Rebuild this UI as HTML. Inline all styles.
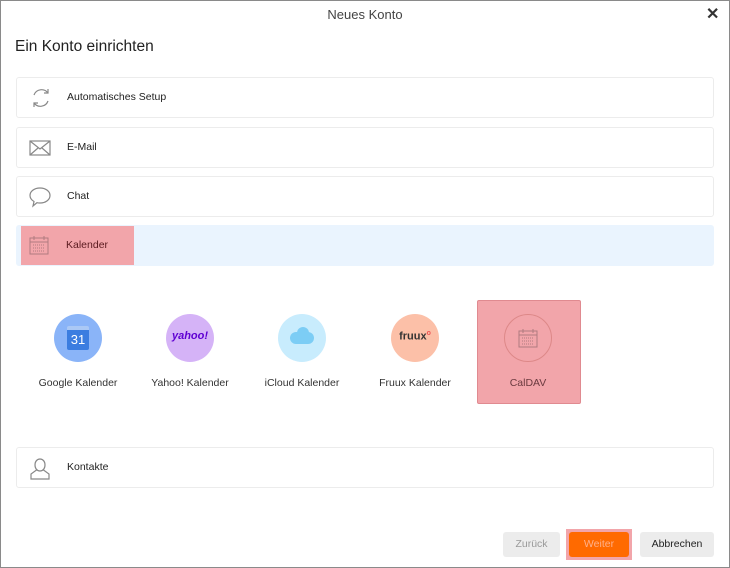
<!DOCTYPE html>
<html><head><meta charset="utf-8"><style>
*{box-sizing:border-box;margin:0;padding:0}
body{width:730px;height:568px;background:#fff;font-family:"Liberation Sans",sans-serif;position:relative;overflow:hidden}
.frame{position:absolute;left:0;top:0;width:730px;height:568px;border:1px solid #8a8a8a;pointer-events:none}
.abs{position:absolute}
.title{left:0;width:730px;top:7px;text-align:center;font-size:13px;color:#444}
.close{left:706px;top:4px;font-size:16px;font-weight:bold;color:#333}
h1{position:absolute;left:15px;top:38px;font-size:15.5px;font-weight:normal;color:#222}
.row{position:absolute;left:16px;width:698px;height:41px;border:1px solid #ececec;border-radius:3px;background:#fff}
.row span{position:absolute;left:50px;top:13px;font-size:10.5px;color:#222}
.row svg{position:absolute;left:11px;top:8px}
.lbl{position:absolute;font-size:10.5px;color:#333;text-align:center;width:110px;top:377px}
.circ{position:absolute;width:48px;height:48px;border-radius:50%;top:314px}
.btn{position:absolute;top:532px;height:25px;border-radius:3px;font-size:10.5px;text-align:center;line-height:25px}
</style></head><body>
<div class="abs title">Neues Konto</div>
<div class="abs close">✕</div>
<h1>Ein Konto einrichten</h1>
<div class="row" style="top:77px"><svg width="26" height="24" viewBox="0 0 26 24" fill="none" stroke="#888" stroke-width="1.2"><path d="M6 9a8 8 0 0 1 14-2M20 15a8 8 0 0 1-14 2"/><path d="M20 3v4h-4M6 21v-4h4"/></svg><span>Automatisches Setup</span></div>
<div class="row" style="top:127px"><svg width="24" height="24" viewBox="0 0 24 24" fill="none" stroke="#888" stroke-width="1.2"><rect x="2" y="5" width="20" height="14"/><path d="M2 5l10 8 10-8M2 19l8-7M22 19l-8-7"/></svg><span>E-Mail</span></div>
<div class="row" style="top:176px"><svg width="24" height="24" viewBox="0 0 24 24" fill="none" stroke="#888" stroke-width="1.2"><path d="M12 3c6 0 10 3.5 10 7.5S18 18 12 18c-1 0-2 0-3-.3L5 21l1-4.5C3.5 15 2 13 2 10.5 2 6.5 6 3 12 3z"/></svg><span>Chat</span></div>
<div class="row" style="top:225px;background:#eaf4fe;border-color:#eaf4fe"></div>
<div class="abs" style="left:21px;top:226px;width:113px;height:39px;background:#f2a5aa"></div>
<svg class="abs" style="left:28px;top:234px" width="22" height="22" viewBox="0 0 22 22" fill="none" stroke="#b07a80" stroke-width="1"><rect x="2" y="4" width="18" height="16"/><path d="M2 8h18M6 2v4M16 2v4"/><path d="M5 11h12M5 14h12M5 17h12" stroke-dasharray="1 1"/></svg>
<div class="abs" style="left:66px;top:239px;font-size:10.5px;color:#5a1a1f">Kalender</div>

<div class="circ" style="left:54px;background:#8ab4f8"><div style="position:absolute;left:13px;top:12px;width:22px;height:24px;background:#3b7de0;border-radius:2px;border-top:4px solid #aac8f5;color:#fff;font-size:13px;text-align:center;line-height:20px">31</div></div>
<div class="circ" style="left:166px;background:#d5b3f7"><div style="position:absolute;width:48px;top:16px;text-align:center;color:#6001d2;font-weight:bold;font-size:11px;font-style:italic">yahoo!</div></div>
<div class="circ" style="left:278px;background:#c8ecfd"><div style="position:absolute;left:12px;top:18px;width:24px;height:12px;background:#7ccdf5;border-radius:8px"></div><div style="position:absolute;left:19px;top:13px;width:12px;height:12px;background:#7ccdf5;border-radius:50%"></div></div>
<div class="circ" style="left:391px;background:#fcc0a8"><div style="position:absolute;width:48px;top:16px;text-align:center;color:#333;font-weight:bold;font-size:11px">fruux<sup style="color:#e55;font-size:7px">o</sup></div></div>
<div class="abs" style="left:477px;top:300px;width:104px;height:104px;background:#f2a5aa;border:1px solid #e08a90;border-radius:2px"></div>
<div class="circ" style="left:504px;border:1px solid #d88;background:#f2a5aa"></div>
<svg class="abs" style="left:517px;top:327px" width="22" height="22" viewBox="0 0 22 22" fill="none" stroke="#b07a80" stroke-width="1"><rect x="2" y="4" width="18" height="16"/><path d="M2 8h18M6 2v4M16 2v4"/><path d="M5 11h12M5 14h12M5 17h12" stroke-dasharray="1 1"/></svg>
<div class="lbl" style="left:23px">Google Kalender</div>
<div class="lbl" style="left:135px">Yahoo! Kalender</div>
<div class="lbl" style="left:247px">iCloud Kalender</div>
<div class="lbl" style="left:360px">Fruux Kalender</div>
<div class="lbl" style="left:473px;color:#6a3a3f">CalDAV</div>

<div class="row" style="top:447px"><svg width="24" height="26" viewBox="0 0 24 26" fill="none" stroke="#888" stroke-width="1.2"><path d="M12 3c-3 0-5 2.5-5 6s2 6 5 6 5-2.5 5-6-2-6-5-6zM8.5 14L3 18v5h18v-5l-5.5-4"/></svg><span>Kontakte</span></div>

<div class="btn" style="left:503px;width:57px;background:#ececec;color:#999">Zurück</div>
<div class="abs" style="left:566px;top:529px;width:66px;height:31px;background:#f2a5aa"></div>
<div class="btn" style="left:569px;width:60px;background:#ff6a00;color:#ffb08a">Weiter</div>
<div class="btn" style="left:640px;width:74px;background:#ececec;color:#222">Abbrechen</div>
<div class="frame"></div>
</body></html>
